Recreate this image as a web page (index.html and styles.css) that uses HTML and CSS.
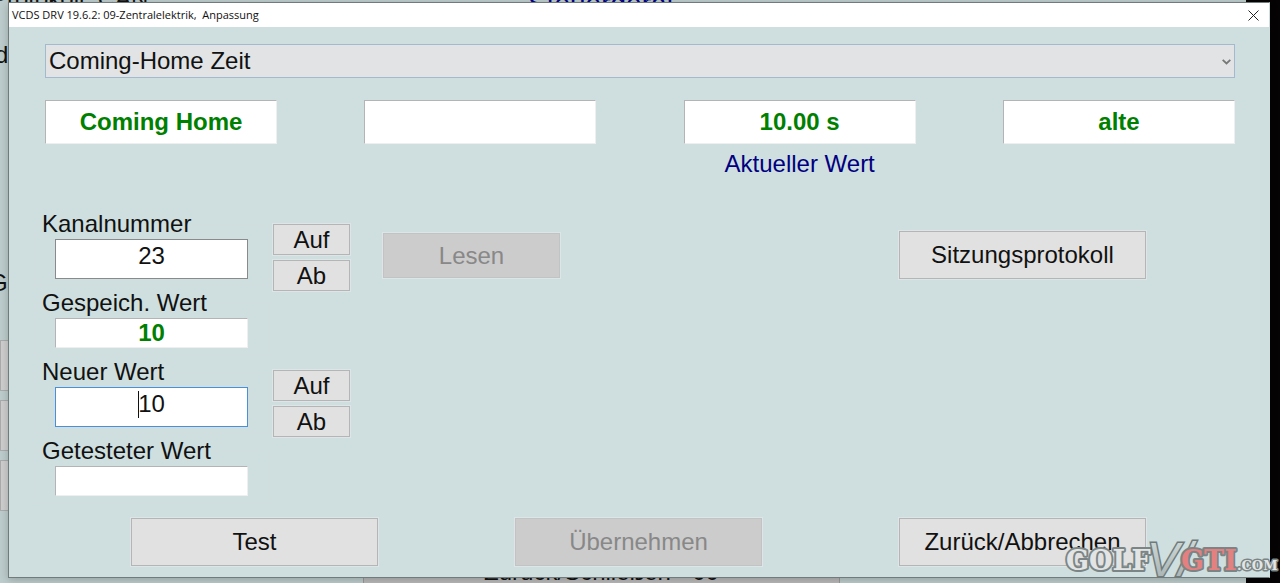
FILE: index.html
```html
<!DOCTYPE html>
<html lang="de">
<head>
    <meta charset="UTF-8">
    <meta name="viewport" content="width=device-width, initial-scale=1.0">
    <title>VCDS DRV 19.6.2: 09-Zentralelektrik, Anpassung</title>
    <link rel="stylesheet" href="styles.css">
</head>
<body>
    <!-- window behind the dialog -->
    <div class="back-window">
        <span class="back-text back-protocol">Protokoll: CAN</span>
        <span class="back-text back-title">Steuergerät</span>
        <span class="back-text back-id">d</span>
        <span class="back-text back-group">G</span>
        <div class="back-tiles">
            <div class="back-tile"></div>
            <div class="back-tile"></div>
            <div class="back-tile"></div>
        </div>
        <div class="back-close"><span>Zurück/Schließen - 00</span></div>
    </div>

    <main class="dialog">
        <header class="title-bar">
            <h1>VCDS DRV 19.6.2: 09-Zentralelektrik,&nbsp; Anpassung</h1>
            <button class="close-button" aria-label="Schließen">
                <svg width="11" height="11" viewBox="0 0 11 11"><path d="M0.5 0.5 L10.5 10.5 M10.5 0.5 L0.5 10.5" stroke="#222" fill="none"/></svg>
            </button>
        </header>

        <div class="dialog-body">
            <div class="channel-select">
                <select aria-label="Kanal">
                    <option>Coming-Home Zeit</option>
                </select>
                <svg class="chevron" width="9" height="6" viewBox="0 0 9 6"><path d="M0.7 0.8 L4.5 4.5 L8.3 0.8" stroke="#777" stroke-width="1.8" fill="none"/></svg>
            </div>

            <div class="readouts">
                <div class="readout-column"><output class="readout">Coming Home</output></div>
                <div class="readout-column"><output class="readout"></output></div>
                <div class="readout-column">
                    <output class="readout">10.00 s</output>
                    <div class="caption">Aktueller Wert</div>
                </div>
                <div class="readout-column"><output class="readout">alte</output></div>
            </div>

            <div class="controls">
                <div class="fields">
                    <fieldset class="group">
                        <legend><label for="channel">Kanalnummer</label></legend>
                        <input class="field" type="text" id="channel" value="23">
                    </fieldset>
                    <fieldset class="group">
                        <legend><label for="stored">Gespeich. Wert</label></legend>
                        <output class="field-output" id="stored">10</output>
                    </fieldset>
                    <fieldset class="group">
                        <legend><label for="newValue">Neuer Wert</label></legend>
                        <div class="active">
                            <input class="field" type="text" id="newValue" value="10">
                        </div>
                    </fieldset>
                    <fieldset class="group">
                        <legend><label for="tested">Getesteter Wert</label></legend>
                        <output class="field-output" id="tested"></output>
                    </fieldset>
                </div>

                <div class="spinners">
                    <div class="spinner">
                        <button class="button small">Auf</button>
                        <button class="button small">Ab</button>
                    </div>
                    <div class="spinner">
                        <button class="button small">Auf</button>
                        <button class="button small">Ab</button>
                    </div>
                </div>

                <button class="button read" disabled>Lesen</button>
                <button class="button wide log">Sitzungsprotokoll</button>
            </div>

            <div class="actions">
                <button class="button wide">Test</button>
                <button class="button wide" disabled>Übernehmen</button>
                <button class="button wide">Zurück/Abbrechen</button>
            </div>
        </div>
    </main>

    <svg class="watermark" width="216" height="50" viewBox="0 0 216 50">
        <defs>
            <linearGradient id="silver" x1="0" y1="0" x2="0" y2="1">
                <stop offset="0" stop-color="#d4dedd"/>
                <stop offset="1" stop-color="#a3adad"/>
            </linearGradient>
        </defs>
        <text class="mark-slab" x="2" y="37">GOLF</text>
        <text class="mark-roman" x="83" y="43" fill="url(#silver)">V/</text>
        <text class="mark-slab mark-red" x="117" y="37">GTI</text>
        <text class="mark-slab mark-com" x="173" y="37">.COM</text>
    </svg>
</body>
</html>
```
FILE: styles.css
```css
* {
    box-sizing: border-box;
}
body {
    margin: 0;
    min-height: 100vh;
    padding: 2px 10px 5px 8px;
    overflow: hidden;
    position: relative;
    background-color: #050303;
    font-family: "Liberation Sans", Arial, sans-serif;
    font-size: 24px;
    line-height: 30px;
    color: #111;
}
button, input, select, output {
    font: inherit;
    color: inherit;
}

/* Window in the background */
.back-window {
    position: absolute;
    top: 0;
    left: 0;
    right: 34px;
    bottom: 0;
    overflow: hidden;
    background-color: #bccbcb;
}
.back-text {
    position: absolute;
    white-space: nowrap;
}
.back-protocol {
    left: -9px;
    top: -16px;
}
.back-title {
    left: 528px;
    top: -11px;
    font-size: 28px;
    color: #000080;
}
.back-id {
    left: -5px;
    top: 40px;
}
.back-group {
    left: -11px;
    top: 268px;
}
.back-tiles {
    position: absolute;
    top: 340px;
    left: 0;
    width: 40px;
    display: flex;
    flex-direction: column;
    gap: 9px;
}
.back-tile {
    height: 51px;
    background-color: #cdcdcd;
    border: 1px solid #aaa;
}
.back-close {
    position: absolute;
    left: 363px;
    bottom: -18px;
    width: 477px;
    height: 50px;
    line-height: 40px;
    text-align: center;
    background-color: #b9b9b9;
    border: 1px solid #999;
}

/* Dialog */
.dialog {
    position: relative;
    background-color: #cfdfdf;
    border: 1px solid #727b7b;
    border-right-color: #cfdfdf;
    box-shadow: 0 2px 8px rgba(0, 0, 0, 0.2);
}
.title-bar {
    display: flex;
    align-items: center;
    justify-content: space-between;
    height: 24px;
    padding: 0 10px 0 3px;
    background-color: white;
}
.title-bar h1 {
    margin: 0;
    font-family: "Open Sans", sans-serif;
    font-size: 11px;
    font-weight: normal;
    line-height: 24px;
}
.close-button {
    display: flex;
    padding: 0;
    border: none;
    background: none;
}
.dialog-body {
    padding: 17px 34px 11px 36px;
}
.channel-select {
    position: relative;
}
.channel-select select {
    display: block;
    width: 100%;
    height: 34px;
    padding: 0 3px;
    appearance: none;
    background-color: #e2e3e5;
    border: 1px solid #a3b9cd;
    border-radius: 0;
}
.chevron {
    position: absolute;
    right: 4px;
    top: 15px;
}

/* Measured values */
.readouts {
    display: flex;
    justify-content: space-between;
    margin-top: 22px;
}
.readout-column {
    width: 232px;
    text-align: center;
}
.readout, .field-output {
    display: block;
    background-color: white;
    border: 1px solid #efefef;
    border-top-color: #b4b4b4;
    border-left-color: #b4b4b4;
    color: #008000;
    font-weight: bold;
    text-align: center;
}
.readout {
    height: 44px;
    line-height: 42px;
}
.caption {
    margin-top: 5px;
    color: #000080;
}

/* Fields and their buttons */
.controls {
    display: flex;
    align-items: flex-start;
    margin-top: 30px;
}
.fields {
    display: flex;
    flex-direction: column;
    gap: 2px;
    width: 234px;
    margin-left: -10px;
}
.group {
    min-width: 0;
    margin: 0;
    padding: 0 20px 6px 19px;
    border: 1px solid #d2dddd;
}
.group legend {
    margin-left: -14px;
    padding: 0 1px;
}
.group label {
    display: block;
}
.field {
    display: block;
    width: 100%;
    height: 40px;
    padding: 0 0 6px;
    background-color: white;
    border: 1px solid #8a8a8a;
    border-radius: 0;
    text-align: center;
}
.field-output {
    height: 30px;
    line-height: 28px;
}
.active {
    position: relative;
}
.active .field {
    border-color: #4a90d9;
    outline: none;
}
/* Text cursor */
.active::after {
    content: "";
    position: absolute;
    left: calc(50% - 14px);
    top: 4px;
    width: 1px;
    height: 27px;
    background-color: #111;
}
.spinners {
    display: flex;
    flex-direction: column;
    gap: 79px;
    margin: 15px 0 0 4px;
}
.spinner {
    display: flex;
    flex-direction: column;
    gap: 5px;
}
.button {
    padding: 0;
    background-color: #e1e1e1;
    border: 1px solid #b5b5b5;
    border-radius: 0;
    box-shadow: 0 0 0 1px #dde6e6;
    text-align: center;
}
.button:disabled {
    background-color: #cccccc;
    border-color: #c3c3c3;
    color: #888;
}
.small {
    width: 77px;
    height: 31px;
    line-height: 29px;
}
.read {
    width: 177px;
    height: 45px;
    margin: 24px 0 0 33px;
}
.wide {
    width: 247px;
    height: 48px;
}
.log {
    margin: 22px 89px 0 auto;
}
.actions {
    display: flex;
    justify-content: space-between;
    margin-top: 15px;
    padding: 0 89px 0 86px;
}

/* Forum logo */
.watermark {
    position: absolute;
    right: 0;
    bottom: 0;
}
.mark-slab {
    font-family: "DejaVu Serif", serif;
    font-size: 27px;
    font-weight: bold;
    fill: #e3e5e5;
    stroke: #7b8585;
    stroke-width: 4px;
    stroke-linejoin: round;
    paint-order: stroke;
}
.mark-red {
    fill: #e58080;
}
.mark-com {
    font-size: 13px;
    stroke-width: 3px;
}
.mark-roman {
    font-family: "Liberation Sans Narrow", "Liberation Sans", sans-serif;
    font-size: 48px;
    font-style: italic;
    stroke: #6f7a7a;
    stroke-width: 3px;
    paint-order: stroke;
}
```
